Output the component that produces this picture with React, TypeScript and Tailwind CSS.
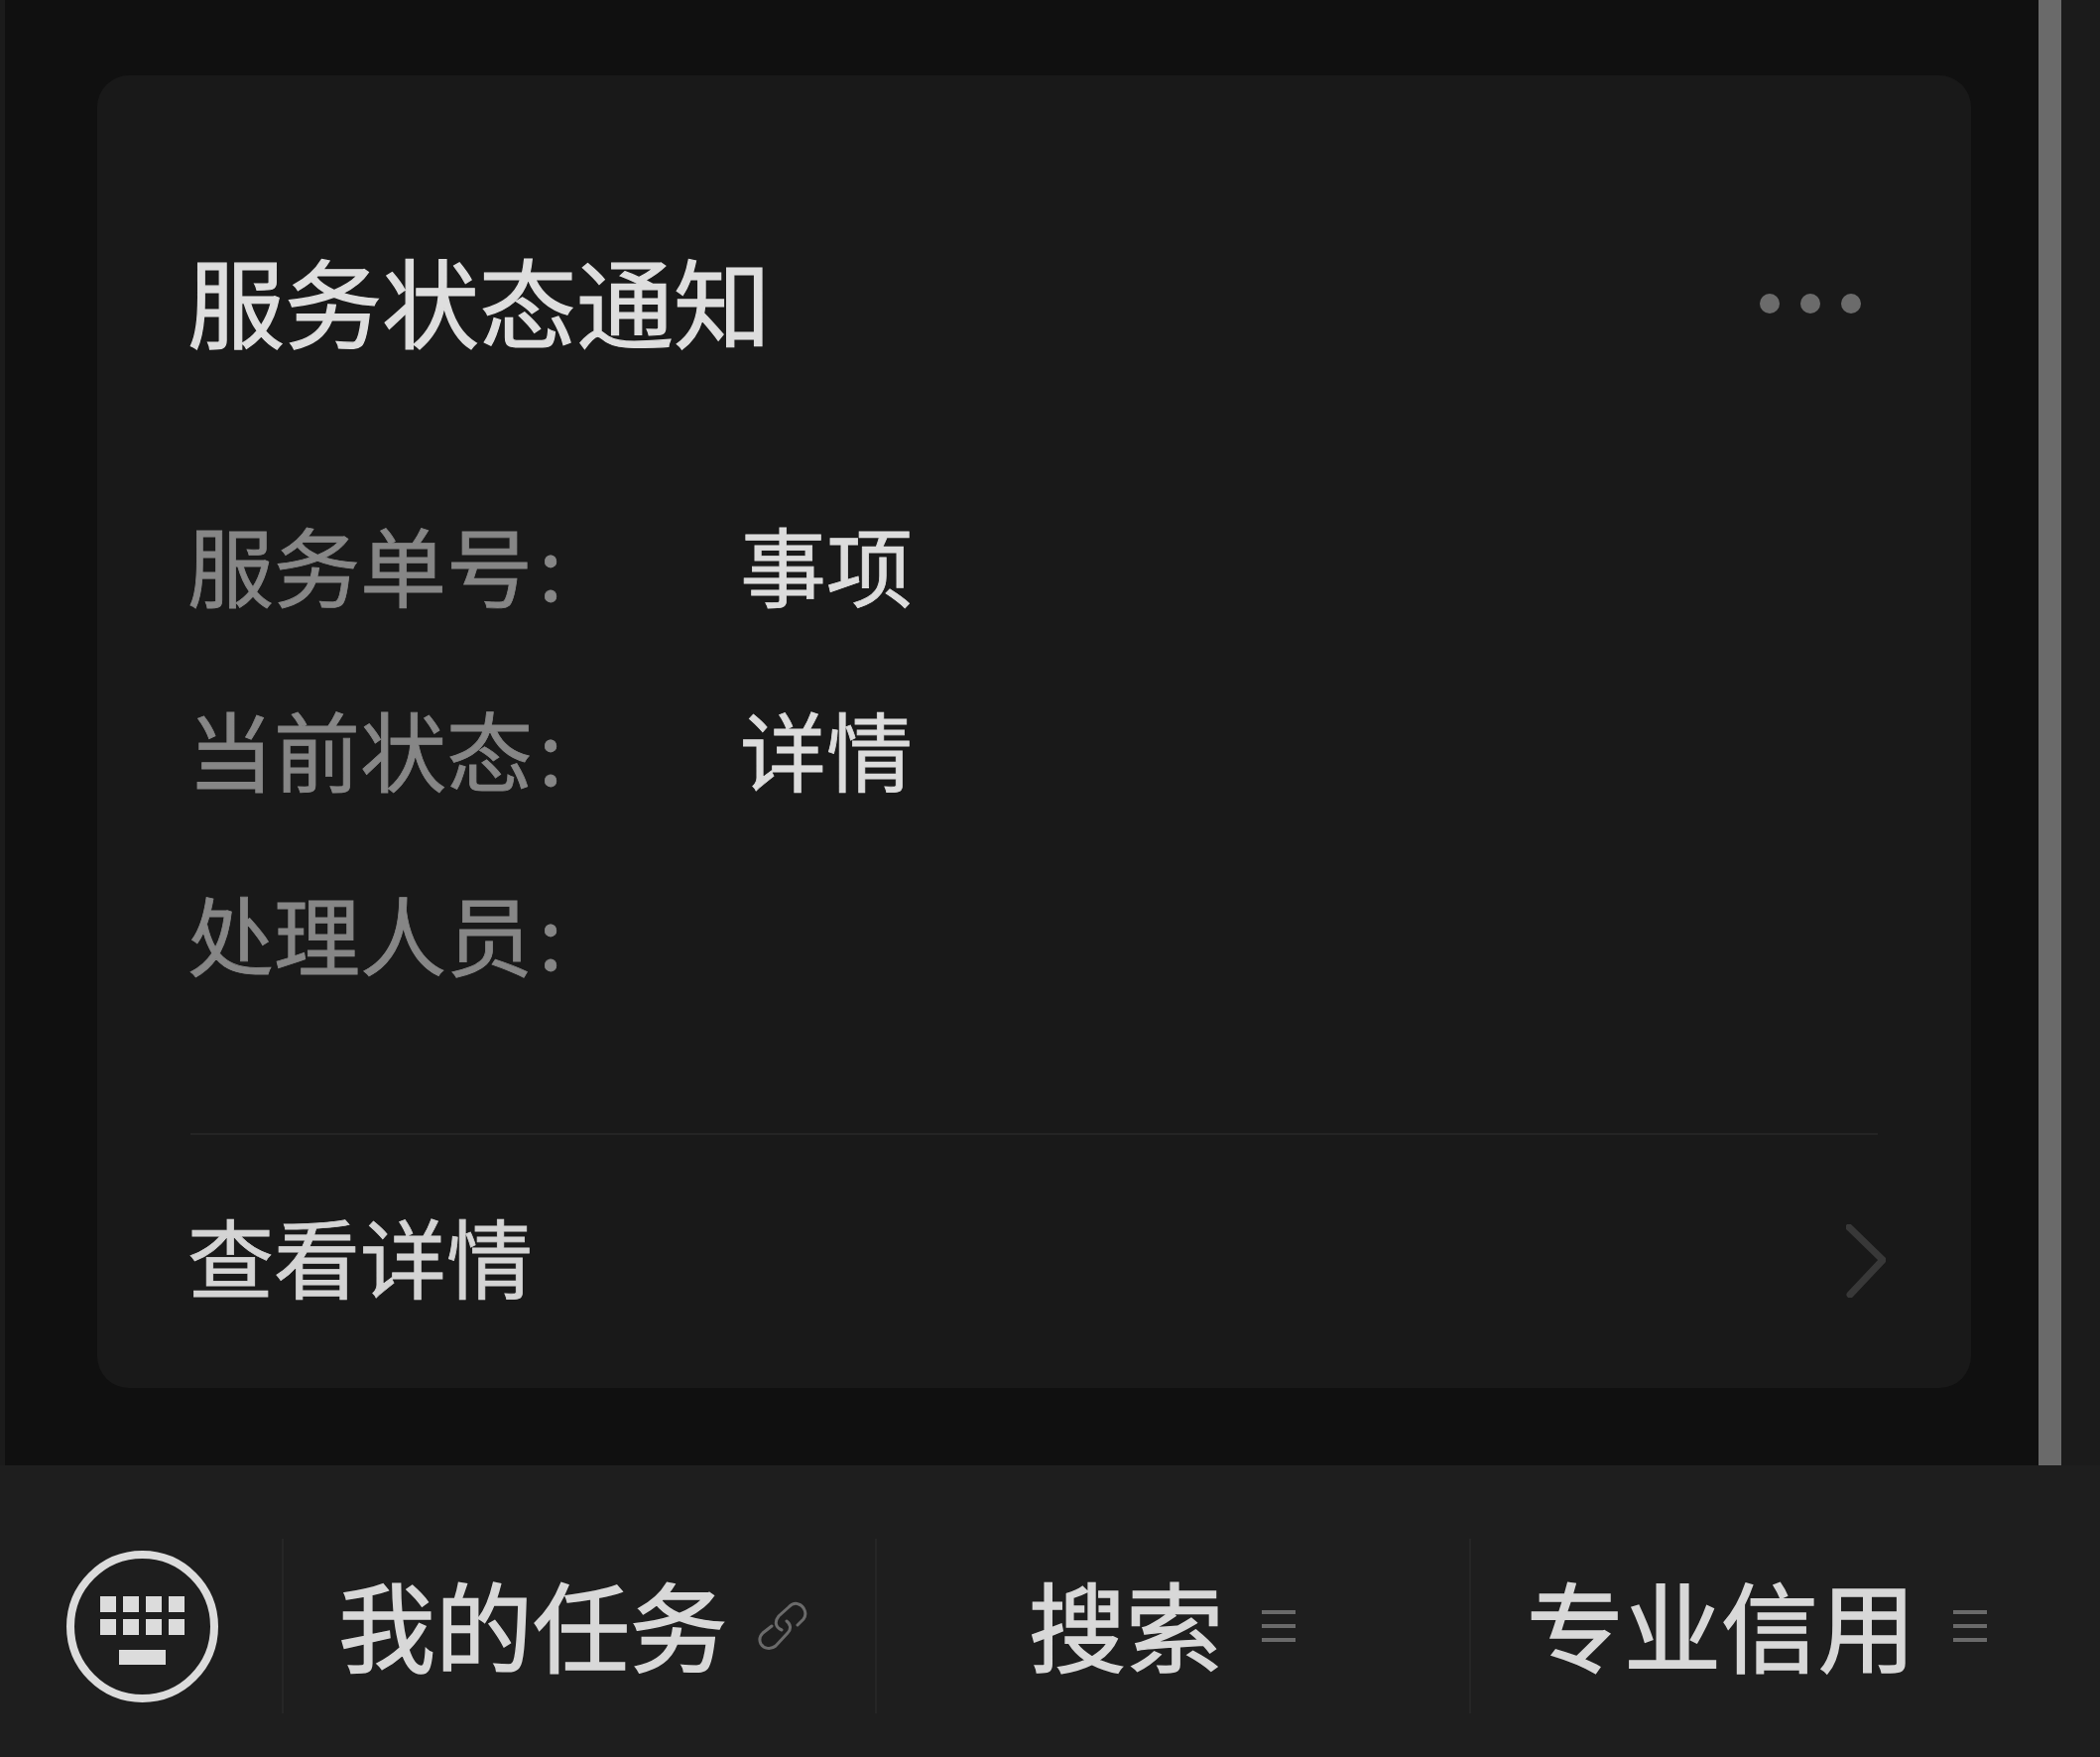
const CJK = "font-['Noto_Sans_CJK_SC','Noto_Sans',sans-serif]";

const KeyboardIcon = () => (
  <svg width="153" height="153" viewBox="0 0 153 153" className="shrink-0">
    <circle cx="76.5" cy="76.5" r="72.5" fill="none" stroke="#dcdcdc" strokeWidth="8" />
    {[34, 57, 80, 103].map((x) => (
      <g key={x} fill="#dcdcdc">
        <rect x={x} y="46" width="16" height="16" />
        <rect x={x} y="69" width="16" height="16" />
      </g>
    ))}
    <rect x="53" y="100" width="47" height="15" fill="#dcdcdc" />
  </svg>
);

const LinkIcon = () => (
  <svg width="50" height="50" viewBox="0 0 50 50" fill="none" stroke="#6b6b6b" strokeWidth="3" strokeLinecap="round" className="shrink-0">
    <path d="M40 24 L46 18 C50 13 47 5 41 3 C37 1 34 3 31 6 L21 15 C17 20 17 26 24 29" />
    <path d="M29 20 C33 23 34 28 30 32 L18 45 C13 49 6 48 3 43 C1 39 2 35 5 32 L14 25" />
  </svg>
);

const MenuIcon = () => (
  <div className="flex w-[34px] shrink-0 flex-col gap-[10px]">
    <div className="h-[4px] bg-[#6a6a6a]" />
    <div className="h-[4px] bg-[#6a6a6a]" />
    <div className="h-[4px] bg-[#6a6a6a]" />
  </div>
);

const Row = ({ label, value }: { label: string; value?: string }) => (
  <div className="flex h-[186px] items-center pb-[5px] text-[87px] [-webkit-text-stroke:0.8px_currentColor]">
    <span className="w-[557px] text-[#868686]">
      {label}
      <span className="ml-[6px]">:</span>
    </span>
    {value && <span className="text-[#dcdcdc]">{value}</span>}
  </div>
);

export default function App() {
  return (
    <div className="h-[1771px] w-[2117px] overflow-hidden bg-[#1b1b1b]">
      <div className={`flex h-[1771px] w-[2117px] flex-col bg-[#1b1b1b] blur-[0.7px] ${CJK}`}>
        <div className="flex h-[1477px] shrink-0">
          <div className="w-[5px] shrink-0" />
          <main className="flex-1 bg-[#101010] pl-[93px] pr-[68px] pt-[76px]">
            <section className="h-[1323px] rounded-[32px] bg-[#191919] pl-[91px] pr-[94px]">
              <div className="flex h-[402px] items-center justify-between pt-[47px]">
                <h1 className="text-[98px] font-normal leading-none text-[#dedede] [-webkit-text-stroke:1.2px_currentColor]">服务状态通知</h1>
                <div className="mr-[17px] mt-[10px] flex gap-[21px]">
                  <span className="h-[20px] w-[20px] rounded-full bg-[#6b6b6b]" />
                  <span className="h-[20px] w-[20px] rounded-full bg-[#6b6b6b]" />
                  <span className="h-[20px] w-[20px] rounded-full bg-[#6b6b6b]" />
                </div>
              </div>
              <Row label="服务单号" value="事项" />
              <Row label="当前状态" value="详情" />
              <Row label="处理人员" />
              <div className="ml-[3px] mt-[106px] h-[2px] bg-[#242424]" />
              <div className="flex h-[242px] items-center justify-between">
                <span className="text-[87px] text-[#d4d4d4] [-webkit-text-stroke:0.8px_currentColor]">查看详情</span>
                <svg width="40" height="74" viewBox="0 0 40 74" fill="none" className="-mr-[8px] mt-[12px] shrink-0">
                  <path d="M3 3 L37 36 L4 71" stroke="#383838" strokeWidth="7" strokeLinecap="round" strokeLinejoin="round" />
                </svg>
              </div>
            </section>
          </main>
          <div className="w-[23px] shrink-0 bg-[#6a6a6a]" />
          <div className="w-[39px] shrink-0" />
        </div>
        <nav className="flex h-[294px] items-center bg-[#1e1e1e] pt-[30px] text-[98px] text-[#d8d8d8] [-webkit-text-stroke:1.5px_currentColor]">
          <div className="w-[284px] shrink-0 pl-[67px]">
            <KeyboardIcon />
          </div>
          <div className="flex h-[176px] w-[598px] shrink-0 items-center gap-[31px] border-l-2 border-[#262626] pl-[55px]">
            <span className="mb-[8px]">我的任务</span>
            <LinkIcon />
          </div>
          <div className="flex h-[176px] w-[599px] shrink-0 items-center gap-[39px] border-l-2 border-[#262626] pl-[153px]">
            <span className="mb-[8px]">搜索</span>
            <MenuIcon />
          </div>
          <div className="flex h-[176px] flex-1 items-center gap-[38px] border-l-2 border-[#262626] pl-[56px]">
            <span className="mb-[8px]">专业信用</span>
            <MenuIcon />
          </div>
        </nav>
      </div>
    </div>
  );
}
